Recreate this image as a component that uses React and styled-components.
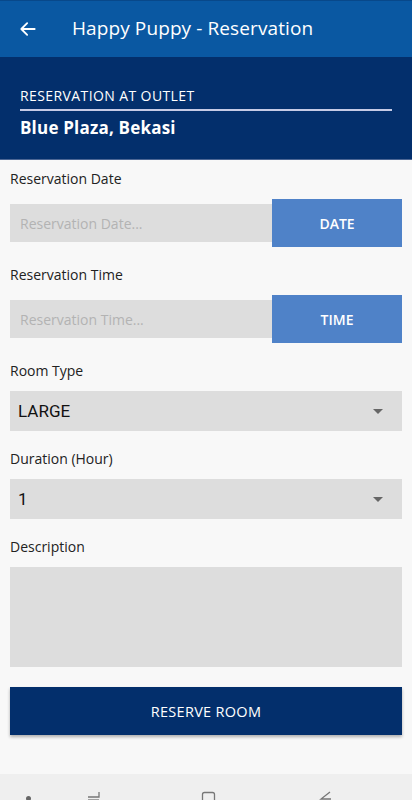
import styled, { createGlobalStyle } from "styled-components";

const GlobalStyle = createGlobalStyle`
  html, body {
    margin: 0;
    padding: 0;
    background: #f8f8f8;
  }
  * {
    box-sizing: border-box;
  }
`;

const App = () => {
  return (
    <>
      <GlobalStyle />
      <Screen>
        <AppBar>
          <BackButton aria-label="back">
            <svg width="20" height="20" viewBox="0 0 24 24" fill="none">
              <path
                d="M20 12H5M11 5l-7 7 7 7"
                stroke="#fff"
                strokeWidth="2.2"
                strokeLinecap="round"
                strokeLinejoin="round"
              />
            </svg>
          </BackButton>
          <Title>Happy Puppy - Reservation</Title>
        </AppBar>

        <OutletPanel>
          <OutletCaption>RESERVATION AT OUTLET</OutletCaption>
          <OutletName>Blue Plaza, Bekasi</OutletName>
        </OutletPanel>

        <Form>
          <Field>
            <Label>Reservation Date</Label>
            <PickerRow>
              <PickerInput placeholder="Reservation Date..." readOnly />
              <PickerButton>DATE</PickerButton>
            </PickerRow>
          </Field>

          <Field>
            <Label>Reservation Time</Label>
            <PickerRow>
              <PickerInput placeholder="Reservation Time..." readOnly />
              <PickerButton>TIME</PickerButton>
            </PickerRow>
          </Field>

          <Field>
            <Label>Room Type</Label>
            <Select>
              <span>LARGE</span>
              <Caret />
            </Select>
          </Field>

          <Field>
            <Label>Duration (Hour)</Label>
            <Select>
              <span>1</span>
              <Caret />
            </Select>
          </Field>

          <Field>
            <Label>Description</Label>
            <TextArea />
          </Field>

          <ReserveButton>RESERVE ROOM</ReserveButton>
        </Form>

        <NavBar>
          <NavDot />
          <svg width="16" height="14" viewBox="0 0 16 14">
            <path d="M12 4v5H1" stroke="#777" strokeWidth="1.3" fill="none" />
            <path d="M1 12h11" stroke="#777" strokeWidth="1.3" />
          </svg>
          <svg width="16" height="14" viewBox="0 0 16 14">
            <rect x="1.5" y="4.5" width="12" height="14" rx="2" stroke="#777" strokeWidth="1.3" fill="none" />
          </svg>
          <svg width="16" height="14" viewBox="0 0 16 14">
            <path d="M13 4L4 11h10" stroke="#777" strokeWidth="1.3" fill="none" />
          </svg>
        </NavBar>
      </Screen>
    </>
  );
};

const Screen = styled.div`
  width: 412px;
  height: 800px;
  display: flex;
  flex-direction: column;
  background: #f8f8f8;
  font-family: "Open Sans", "Liberation Sans", sans-serif;
  overflow: hidden;
`;

const AppBar = styled.header`
  height: 57px;
  flex-shrink: 0;
  display: flex;
  align-items: center;
  background: #0a58a2;
  border-top: 1px solid #08488a;
  color: #fff;
`;

const BackButton = styled.button`
  width: 56px;
  height: 56px;
  padding: 0 0 0 18px;
  border: none;
  background: transparent;
  display: flex;
  align-items: center;
`;

const Title = styled.h1`
  margin: -2px 0 0 16px;
  font-size: 19px;
  font-weight: 400;
  letter-spacing: 0.1px;
`;

const OutletPanel = styled.section`
  height: 103px;
  flex-shrink: 0;
  background: #032f6c;
  border-bottom: 1px solid #4c6694;
  padding: 30px 20px 0;
  color: #fff;
`;

const OutletCaption = styled.div`
  font-size: 14px;
  line-height: 18px;
  letter-spacing: 0.4px;
  padding-bottom: 4px;
  border-bottom: 2px solid #c6cbe6;
`;

const OutletName = styled.div`
  margin-top: 6px;
  font-size: 17px;
  font-weight: 700;
  line-height: 22px;
  letter-spacing: 0.2px;
`;

const Form = styled.main`
  flex: 1;
  display: flex;
  flex-direction: column;
  padding: 9px 10px 0;
`;

const Field = styled.div`
  display: flex;
  flex-direction: column;
  margin-bottom: 18px;
`;

const Label = styled.label`
  font-size: 14px;
  line-height: 20px;
  color: #222;
  margin-bottom: 10px;
`;

const PickerRow = styled.div`
  display: flex;
  align-items: center;
  height: 48px;
`;

const PickerInput = styled.input`
  flex: 1;
  min-width: 0;
  height: 38px;
  border: none;
  outline: none;
  background: #dddddd;
  padding: 0 10px;
  font-family: inherit;
  font-size: 14px;

  &::placeholder {
    color: #b3b3b3;
  }
`;

const PickerButton = styled.button`
  width: 130px;
  height: 48px;
  border: none;
  background: #4f82c8;
  color: #fff;
  font-family: inherit;
  font-size: 14px;
  font-weight: 600;
`;

const Select = styled.div`
  height: 40px;
  display: flex;
  align-items: center;
  justify-content: space-between;
  padding: 0 19px 0 8px;
  background: #dddddd;
  font-family: Roboto, "Liberation Sans", sans-serif;
  font-size: 17px;
  color: #111;
`;

const Caret = styled.span`
  width: 0;
  height: 0;
  border-left: 5px solid transparent;
  border-right: 5px solid transparent;
  border-top: 5px solid #666;
`;

const TextArea = styled.div`
  height: 100px;
  background: #dddddd;
`;

const ReserveButton = styled.button`
  height: 48px;
  margin-top: 2px;
  border: none;
  background: #032f6c;
  color: #fff;
  font-family: inherit;
  font-size: 14.5px;
  letter-spacing: 0.3px;
  box-shadow: 0 2px 3px rgba(0, 0, 0, 0.3);
`;

const NavBar = styled.nav`
  height: 26px;
  flex-shrink: 0;
  background: #efefef;
  display: flex;
  align-items: flex-end;
  padding: 0 0 0 26px;
  overflow: hidden;

  svg:nth-of-type(1) {
    margin-left: 56px;
    transform: translateY(2px);
  }
  svg:nth-of-type(2) {
    margin-left: 98px;
    transform: translateY(2px);
  }
  svg:nth-of-type(3) {
    margin-left: 100px;
    transform: translateY(2px);
  }
`;

const NavDot = styled.span`
  width: 5px;
  height: 5px;
  border-radius: 50%;
  background: #666;
  margin-bottom: -1px;
`;

export default App;
